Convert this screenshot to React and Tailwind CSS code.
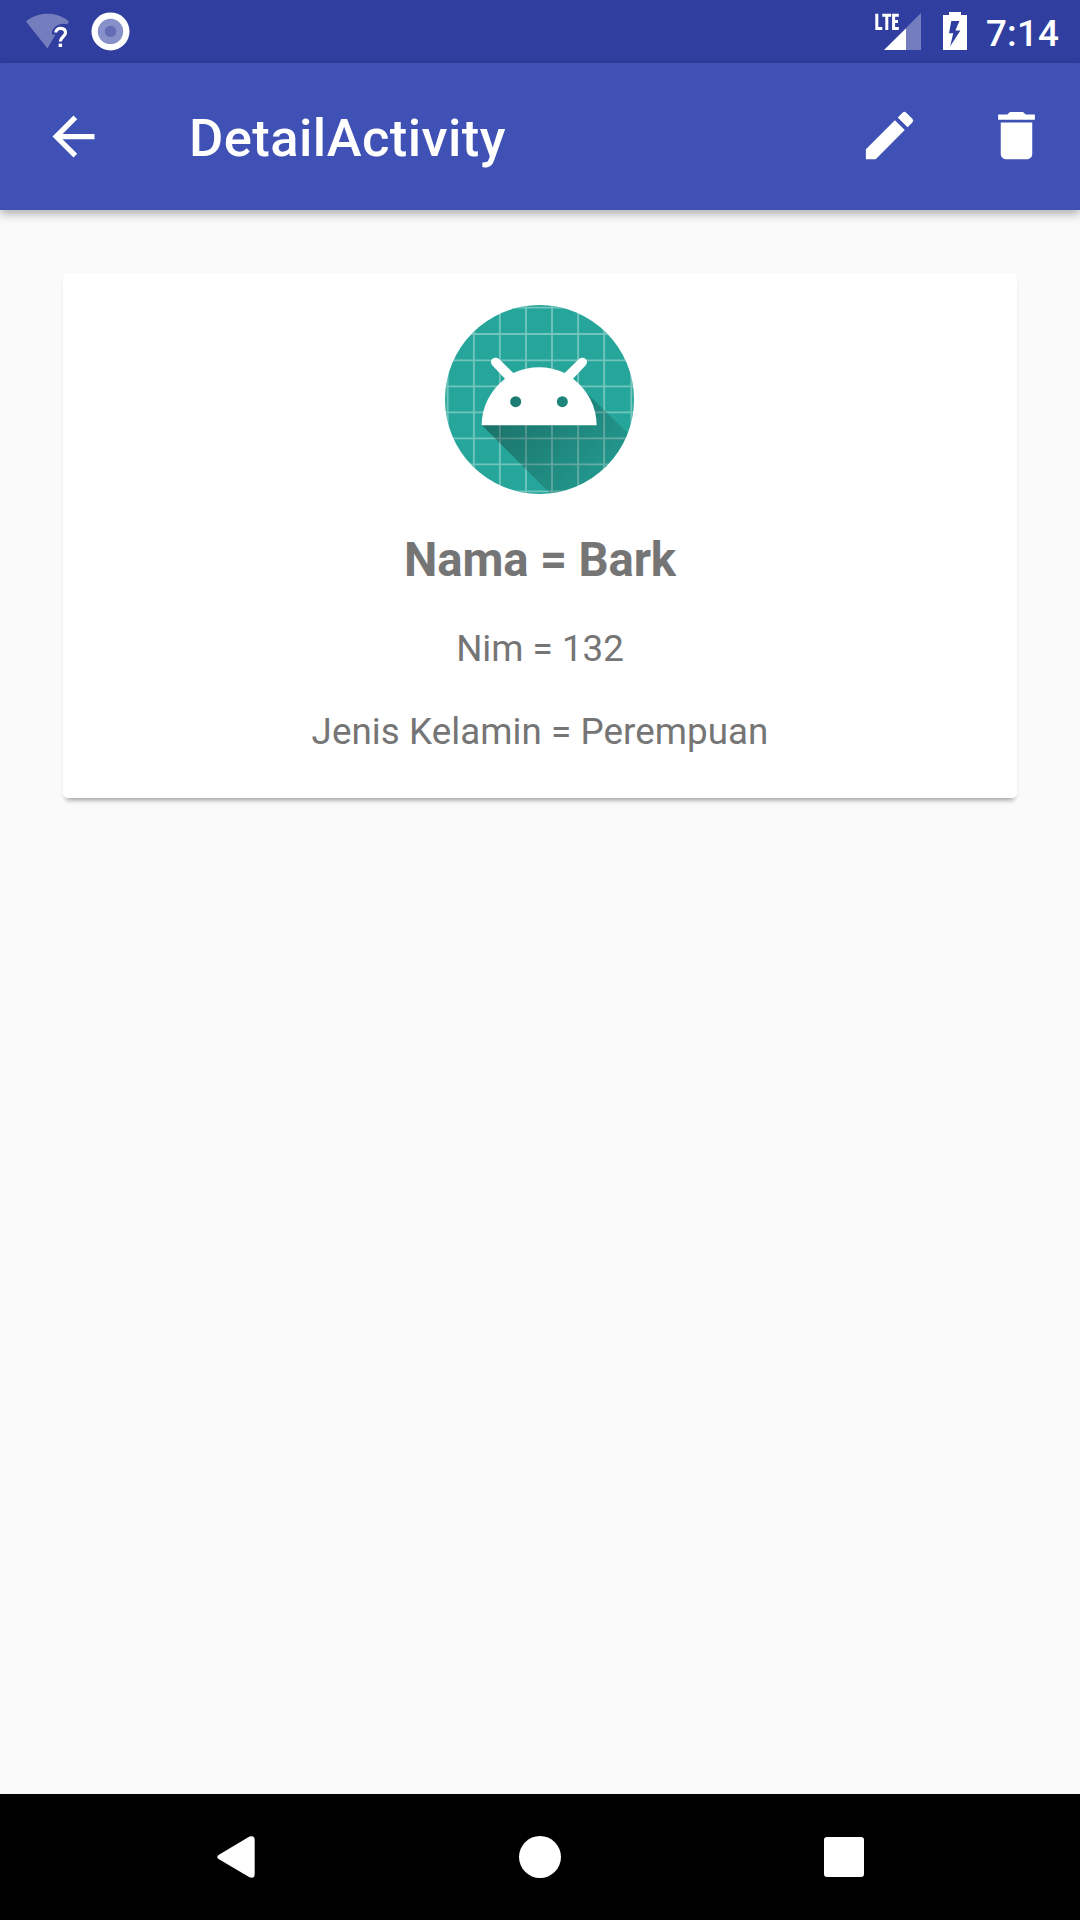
function StatusBar() {
  return (
    <header className="flex h-[63px] items-center bg-[#303f9f]">
      <svg className="ml-[22px] h-[63px] w-[48px]" viewBox="22 0 48 63" fill="#fff">
        <path
          d="M26 21.5C38 11.3 57 11.3 69 21.5L67.3 24.3C62 22.5 53.5 25 52 32V34.5H55.5L47.5 48.5Z"
          fillOpacity=".33"
        />
        <path
          d="M55.8 32.6C55.8 29.8 58 28.4 60.6 28.4C63.5 28.4 65.5 30 65.5 32.8C65.5 36.6 60.3 37 60.3 41.6"
          fill="none"
          stroke="#fff"
          strokeWidth="3.2"
        />
        <rect x="58.6" y="43.6" width="3.5" height="3.4" />
      </svg>
      <svg className="ml-[20px] h-[63px] w-[42px]" viewBox="90 0 42 63">
        <circle cx="110.5" cy="31.4" r="19" fill="#fff" />
        <circle cx="110.5" cy="31.4" r="12.7" fill="#8890c9" />
        <circle cx="110.5" cy="31.4" r="5.7" fill="#626db6" />
      </svg>
      <div className="ml-auto flex h-[63px]">
        <svg className="h-[63px] w-[52px]" viewBox="872 0 52 63">
          <path d="M921 13V50H906V28Z" fill="#fff" fillOpacity=".33" />
          <path d="M906 28.2V50H884Z" fill="#fff" />
          <path
            d="M876.8 13.7V28.4H882.3M882.3 15.2H891.2M886.8 15.2V30M898.8 15.2H893.6V28.4H898.8M893.6 21.6H898"
            fill="none"
            stroke="#fff"
            strokeWidth="3"
          />
        </svg>
        <svg className="ml-[16px] h-[63px] w-[30px]" viewBox="940 0 30 63">
          <path
            d="M949 12H961V15H967V50H943V15H949ZM951.3 21L949 33.2H953.2L950.2 46.3L960.4 30.6H955.4L959.4 21Z"
            fill="#fff"
            fillRule="evenodd"
          />
        </svg>
        <span className="ml-[16px] w-[94px] text-[36.75px] leading-[67px] font-medium tracking-[0.2px] whitespace-nowrap text-white">
          7:14
        </span>
      </div>
    </header>
  );
}

function AppBar() {
  return (
    <div className="relative flex h-[147px] items-center bg-[#3f51b5] text-white shadow-[0_4px_9px_rgba(0,0,0,0.3)]">
      <svg className="ml-[42px] size-[63px]" viewBox="0 0 24 24" fill="currentColor">
        <path d="M20 11H7.83l5.59-5.59L12 4l-8 8 8 8 1.41-1.41L7.83 13H20v-2z" />
      </svg>
      <h1 className="ml-[84px] pt-[3px] text-[52.5px] leading-[62px] font-medium tracking-[0.45px]">DetailActivity</h1>
      <svg className="mb-[2px] ml-auto size-[63px]" viewBox="0 0 24 24" fill="currentColor">
        <path d="M3 17.25V21h3.75L17.81 9.94l-3.75-3.75L3 17.25zM20.71 7.04a.996.996 0 0 0 0-1.41l-2.34-2.34a.996.996 0 0 0-1.41 0l-1.83 1.83 3.75 3.75 1.83-1.83z" />
      </svg>
      <svg className="mr-[32px] mb-[2px] ml-[64px] size-[63px]" viewBox="0 0 24 24" fill="currentColor">
        <path d="M6 19c0 1.1.9 2 2 2h8c1.1 0 2-.9 2-2V7H6v12zM19 4h-3.5l-1-1h-5l-1 1H5v2h14V4z" />
      </svg>
    </div>
  );
}

function Avatar() {
  return (
    <svg className="mr-[2px] size-[189px]" viewBox="45 44 567 567">
      <defs>
        <clipPath id="disc">
          <circle cx="328.5" cy="327.5" r="283.5" />
        </clipPath>
        <linearGradient id="shade" gradientUnits="userSpaceOnUse" x1="220" y1="330" x2="480" y2="590">
          <stop offset="0" stopOpacity=".32" />
          <stop offset="1" stopOpacity=".09" />
        </linearGradient>
      </defs>
      <g clipPath="url(#disc)">
        <path d="M45 44h567v567H45z" fill="#26a69a" />
        <path
          d="M53 44V611M131.500 44V611M209.500 44V611M288 44V611M366 44V611M444.500 44V611M522.500 44V611M604 44V611M45 52H612M45 131H612M45 210H612M45 288H612M45 366H612M45 444H612M45 522H612M45 603H612"
          stroke="#fff"
          strokeOpacity=".35"
          strokeWidth="5.500"
        />
        <path d="M155 404L430 679H830V660L473 311L400 290H220Z" fill="url(#shade)" />
      </g>
      <path
        d="M155 405C155 350 181 299 225 265L188 226C174 211 192 194 207 206L250 248C299 225 356 225 404 248L447 206C462 194 480 211 466 226L429 265C474 299 500 350 500 405Z"
        fill="#fff"
      />
      <circle cx="257" cy="334" r="16.500" fill="#1c7c73" />
      <circle cx="397" cy="334" r="16.500" fill="#1e857b" />
    </svg>
  );
}

function NavBar() {
  return (
    <nav className="flex h-[126px] items-center bg-black">
      <svg className="ml-[216px] h-[44px] w-[40px]" viewBox="216 1835 40 44" fill="#fff">
        <path d="M218.500 1855L249.500 1836.500Q254.700 1835 254.700 1840V1874Q254.700 1879 249.500 1877.300L218.500 1859Q216 1857 218.500 1855Z" />
      </svg>
      <div className="ml-[263px] size-[42px] rounded-full bg-white" />
      <div className="ml-[263px] size-[40px] rounded-[3px] bg-white" />
    </nav>
  );
}

export default function App() {
  return (
    <div className="flex h-[1920px] w-[1080px] flex-col bg-[#fafafa] font-['Roboto',sans-serif]">
      <StatusBar />
      <AppBar />
      <main className="flex-1 px-[63px] pt-[63px]">
        <section className="flex h-[525px] flex-col items-center rounded-[5px] bg-white pt-[32px] text-[#757575] shadow-[0_5px_5px_-3px_rgba(0,0,0,0.38)]">
          <Avatar />
          <h2 className="mt-[38px] text-[47.25px] leading-[56px] font-bold tracking-[-0.15px]">Nama = Bark</h2>
          <p className="mt-[39px] text-[36.75px] leading-[44px]">Nim = 132</p>
          <p className="mt-[39px] text-[36.75px] leading-[44px] tracking-[0.06px]">Jenis Kelamin = Perempuan</p>
        </section>
      </main>
      <NavBar />
    </div>
  );
}
